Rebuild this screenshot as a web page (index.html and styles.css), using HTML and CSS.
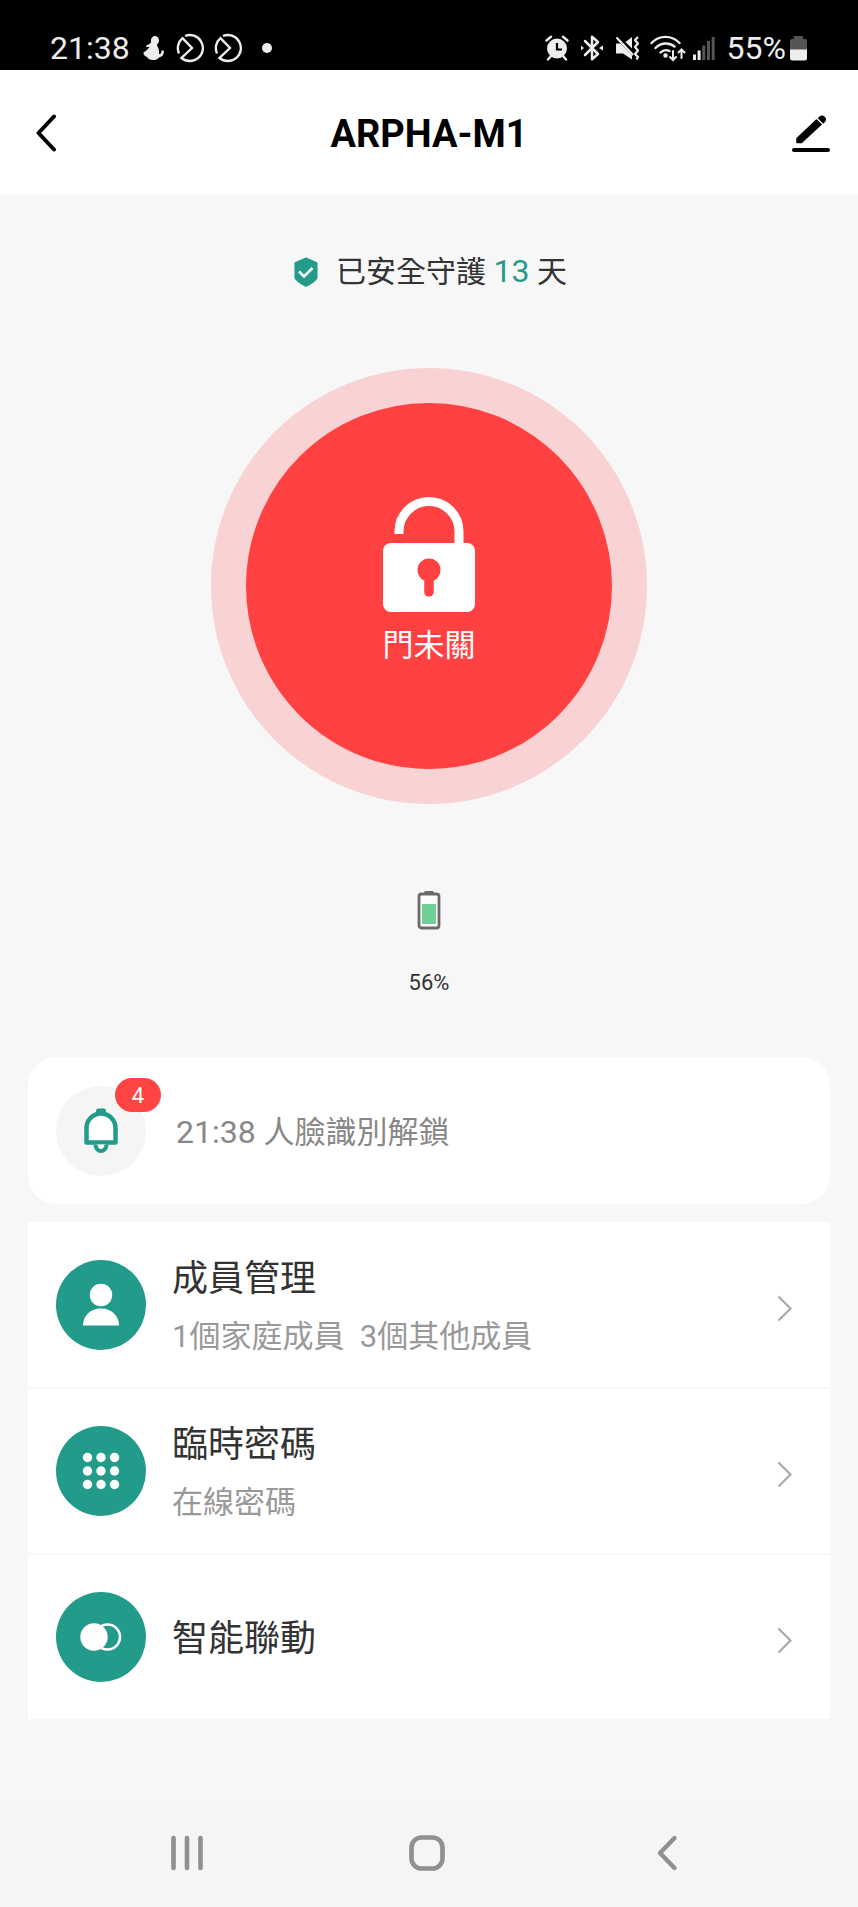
FILE: index.html
```html
<!DOCTYPE html>
<html lang="zh-Hant">
<head>
<meta charset="utf-8">
<meta name="viewport" content="width=device-width, initial-scale=1">
<title>ARPHA-M1</title>
<link rel="stylesheet" href="styles.css">
</head>
<body>
<div class="screen">
  <div class="statusbar">
    <div class="status-group">
      <span class="status-text">21:38</span>
      <svg class="status-person" width="22" height="26" viewBox="0 0 22 26" aria-hidden="true">
        <path d="M8 6a4 4.500 0 1 1 6.500 3c-.8 1-.8 1.500 0 2.500c1.500 2 1.800 4.500 1.500 7.500c1.800.3 2.500-1 2.500-3.500h2.300c.5 4.500-1.500 6.500-4.800 7c-1.500 2-3.500 2.500-6 2.500c-3 0-5-1-6-3C1.500 21 .3 19.500.5 17.500c2.500-1.500 4.500-3.500 6.500-6c-1 .8-2.500.8-4 0l.8-1.600c2 0 3.200-1.400 4.200-2.400z" fill="#ededed"/>
      </svg>
      <svg class="status-ring" width="30" height="30" viewBox="0 0 30 30" aria-hidden="true">
        <path d="M9 3A13 13 0 1 1 5.500 25L16 15L6.500 5.200A13 13 0 0 0 3 20.500" fill="none" stroke="#ededed" stroke-width="2.400"/>
      </svg>
      <svg class="status-ring" width="30" height="30" viewBox="0 0 30 30" aria-hidden="true">
        <path d="M9 3A13 13 0 1 1 5.500 25L16 15L6.500 5.200A13 13 0 0 0 3 20.500" fill="none" stroke="#ededed" stroke-width="2.400"/>
      </svg>
      <span class="status-dot"></span>
    </div>
    <div class="status-group">
      <svg class="status-alarm" width="24" height="26" viewBox="0 0 24 26" aria-hidden="true">
        <circle cx="12" cy="13.500" r="10" fill="#ededed"/>
        <path d="M1.500 5.500L6 1.800M22.500 5.500L18 1.800M6 21l-3 3.500M18 21l3 3.500" fill="none" stroke="#ededed" stroke-width="2.400" stroke-linecap="round"/>
        <path d="M12 8v6.500h5" fill="none" stroke="#000" stroke-width="2.200"/>
      </svg>
      <svg class="status-bt" width="22" height="26" viewBox="0 0 22 26" aria-hidden="true">
        <path d="M4 6l13 13l-6 5.200V1.800L17 7L4 20" fill="none" stroke="#ededed" stroke-width="2.500" stroke-linejoin="round" stroke-linecap="round"/>
        <path d="M0 10.500l3 2.500l-3 2.500zM22 10.500l-4 2.500l4 2.500z" fill="#ededed"/>
      </svg>
      <svg class="status-mute" width="26" height="26" viewBox="0 0 26 26" aria-hidden="true">
        <path d="M1 8.500h4.500l11.500 12v4L8 18.500H1zM10.500 7L17 2v11.500z" fill="#ededed"/>
        <path d="M1.500 2.500L18 20" stroke="#ededed" stroke-width="2.200"/>
        <path d="M23 2l-3 3l3 3.500l-3 3.500l3 3.500l-3 3.500l3 3l-1.500 2.500" fill="none" stroke="#ededed" stroke-width="2.200" stroke-linejoin="round"/>
      </svg>
      <svg class="status-wifi" width="36" height="28" viewBox="0 0 36 28" aria-hidden="true">
        <g fill="none" stroke="#ededed" stroke-width="2.400" stroke-linecap="round">
          <path d="M1.500 9a19 19 0 0 1 28 0M5.500 14a14 14 0 0 1 19-1.500M10.500 18.500a8 8 0 0 1 9-1.500"/>
          <path d="M23 17v8.500M20 23l3 3l3-3M31.500 24v-8.500M28.500 18.500l3-3l3 3" stroke-width="2"/>
        </g>
        <circle cx="15.500" cy="21.500" r="2.200" fill="#ededed"/>
      </svg>
      <svg class="status-signal" width="22" height="26" viewBox="0 0 22 26" aria-hidden="true">
        <path d="M0 19.500h3v5.500H0zM4.600 15.500h3V25h-3z" fill="#ededed"/>
        <path d="M9.300 10.500h3V25h-3zM14 6h3v19h-3zM18.700 2h3v23h-3z" fill="#555"/>
      </svg>
      <span class="status-text">55%</span>
      <svg class="status-battery" width="17" height="26" viewBox="0 0 17 26" aria-hidden="true">
        <path d="M4 1h9v3h2a2 2 0 0 1 2 2v9H0V6a2 2 0 0 1 2-2h2z" fill="#555"/>
        <path d="M0 14.500h17V23a2.500 2.500 0 0 1-2.500 2.500h-12A2.500 2.500 0 0 1 0 23z" fill="#ededed"/>
      </svg>
    </div>
  </div>

  <header class="header">
    <button class="icon-button" aria-label="返回">
      <svg width="20" height="38" viewBox="0 0 20 38" aria-hidden="true"><path d="M18 2.500L2.500 19L18 35.500" fill="none" stroke="#000" stroke-width="4" stroke-linecap="round" stroke-linejoin="round"/></svg>
    </button>
    <h1 class="title">ARPHA-M1</h1>
    <button class="icon-button icon-button-end" aria-label="編輯">
      <svg width="38" height="38" viewBox="0 0 38 38" aria-hidden="true">
        <path d="M2 36h34" stroke="#000" stroke-width="4" stroke-linecap="round"/>
        <path d="M5 24.500L24.500 6l4.500 4.500L9.500 28.500H5z" fill="#000" stroke="#000" stroke-width="1.500" stroke-linejoin="round"/>
        <path d="M25.700 4.300l1.500-1.500a3.800 3.800 0 0 1 5.600 5.400l-1.600 1.600z" fill="#000"/>
      </svg>
    </button>
  </header>

  <main class="content">
    <p class="guard">
      <svg width="24" height="30" viewBox="0 0 24 30" aria-hidden="true">
        <path d="M12 1.200L22.800 6v14.500c0 2-6.500 7-10.800 8.500C7.700 27.500 1.200 22.500 1.200 20.500V6z" fill="#239b8b" stroke="#239b8b" stroke-width="1.500" stroke-linejoin="round"/>
        <path d="M5 14.500l5 5l8.500-8.500" fill="none" stroke="#fff" stroke-width="2.500"/>
      </svg>
      <span>已安全守護 <strong class="guard-days">13</strong> 天</span>
    </p>

    <button class="lock">
      <svg width="92" height="116" viewBox="0 0 92 116" aria-hidden="true">
        <path d="M16 38v-2.500a30 30 0 0 1 60 0V50" fill="none" stroke="#fff" stroke-width="9"/>
        <rect y="47" width="92" height="69" rx="8" fill="#fff"/>
        <circle cx="46" cy="74" r="11.500" fill="#ff4141"/>
        <path d="M46 76v20" stroke="#ff4141" stroke-width="9.500" stroke-linecap="round"/>
      </svg>
      <span>門未關</span>
    </button>

    <div class="battery">
      <svg width="24" height="40" viewBox="0 0 24 40" aria-hidden="true">
        <rect x="2" y="4" width="20" height="34" rx="2.500" fill="#fbfbfb" stroke="#6e6a6a" stroke-width="2.800"/>
        <path d="M8 1.500h8l1 2.500H7z" fill="#6e6a6a" stroke="#6e6a6a" stroke-linejoin="round"/>
        <path d="M5 14h14v20H5z" fill="#6fcf97"/>
      </svg>
      <span>56%</span>
    </div>

    <a class="notice" href="#">
      <span class="bubble bubble-light">
        <svg width="36" height="46" viewBox="0 0 36 46" aria-hidden="true">
          <path d="M3.500 34.500V20a14.500 14.500 0 0 1 29 0v14.500z" fill="#fff" stroke="#239b8b" stroke-width="4.500" stroke-linejoin="round"/>
          <path d="M15.500 3h5" stroke="#239b8b" stroke-width="5" stroke-linecap="round"/>
          <path d="M12.500 36.500a5.500 6.500 0 0 0 11 0" fill="#fff" stroke="#239b8b" stroke-width="4"/>
        </svg>
        <span class="badge">4</span>
      </span>
      <span class="notice-text"><time class="notice-time">21:38</time> 人臉識別解鎖</span>
    </a>

    <nav class="menu">
      <a class="row" href="#">
        <span class="bubble">
          <svg width="38" height="46" viewBox="0 0 38 46" aria-hidden="true"><circle cx="19" cy="13" r="11.200" fill="#fff"/><path d="M1 43.500c0-9 6.500-17 18-17s18 8 18 17z" fill="#fff"/></svg>
        </span>
        <span class="row-body">
          <span class="row-title">成員管理</span>
          <span class="row-note">1個家庭成員&nbsp; 3個其他成員</span>
        </span>
        <svg class="chevron" width="15" height="34" viewBox="0 0 15 34" aria-hidden="true"><path d="M1.500 8.500L13.500 20.500L1.500 32.500" fill="none" stroke="#aaa" stroke-width="2.200"/></svg>
      </a>
      <a class="row" href="#">
        <span class="bubble">
          <svg width="38" height="38" viewBox="0 0 38 38" fill="#fff" aria-hidden="true">
            <circle cx="5.500" cy="5.500" r="4.700"/><circle cx="19" cy="5.500" r="4.700"/><circle cx="32.500" cy="5.500" r="4.700"/>
            <circle cx="5.500" cy="19" r="4.700"/><circle cx="19" cy="19" r="4.700"/><circle cx="32.500" cy="19" r="4.700"/>
            <circle cx="5.500" cy="32.500" r="4.700"/><circle cx="19" cy="32.500" r="4.700"/><circle cx="32.500" cy="32.500" r="4.700"/>
          </svg>
        </span>
        <span class="row-body">
          <span class="row-title">臨時密碼</span>
          <span class="row-note">在線密碼</span>
        </span>
        <svg class="chevron" width="15" height="34" viewBox="0 0 15 34" aria-hidden="true"><path d="M1.500 8.500L13.500 20.500L1.500 32.500" fill="none" stroke="#aaa" stroke-width="2.200"/></svg>
      </a>
      <a class="row" href="#">
        <span class="bubble">
          <svg width="42" height="28" viewBox="0 0 42 28" aria-hidden="true"><circle cx="14" cy="14" r="13.700" fill="#fff"/><circle cx="27.500" cy="14" r="12.500" fill="none" stroke="#fff" stroke-width="2.600"/></svg>
        </span>
        <span class="row-body">
          <span class="row-title">智能聯動</span>
        </span>
        <svg class="chevron" width="15" height="34" viewBox="0 0 15 34" aria-hidden="true"><path d="M1.500 8.500L13.500 20.500L1.500 32.500" fill="none" stroke="#aaa" stroke-width="2.200"/></svg>
      </a>
    </nav>
  </main>

  <div class="navbar">
    <button class="nav-button" aria-label="最近使用">
      <svg width="34" height="38" viewBox="0 0 34 38" aria-hidden="true"><path d="M3.500 4v30M17 4v30M30.500 4v30" stroke="#909090" stroke-width="4.600" stroke-linecap="round"/></svg>
    </button>
    <button class="nav-button" aria-label="主畫面">
      <svg width="38" height="38" viewBox="0 0 38 38" aria-hidden="true"><rect x="3.500" y="3.500" width="31" height="31" rx="10" fill="none" stroke="#909090" stroke-width="4.600"/></svg>
    </button>
    <button class="nav-button" aria-label="返回">
      <svg width="22" height="38" viewBox="0 0 22 38" aria-hidden="true"><path d="M18.500 4L4 19L18.500 34" fill="none" stroke="#909090" stroke-width="4.400" stroke-linecap="round" stroke-linejoin="round"/></svg>
    </button>
  </div>
</div>
</body>
</html>
```
FILE: styles.css
```css
* {
  box-sizing: border-box;
}

body {
  margin: 0;
  background: #f7f7f7;
  color: #333;
  font-family: Roboto, "Noto Sans CJK TC", sans-serif;
  font-weight: 400;
}

button {
  padding: 0;
  border: 0;
  background: none;
  color: inherit;
  font: inherit;
  cursor: pointer;
}

a {
  color: inherit;
  text-decoration: none;
}

svg {
  display: block;
  flex: none;
}

.screen {
  display: flex;
  flex-direction: column;
  min-height: 100vh;
}

.statusbar {
  display: flex;
  justify-content: space-between;
  align-items: center;
  height: 70px;
  padding: 26px 51px 0 50px;
  background: #000;
  color: #ededed;
}

.status-group {
  display: flex;
  align-items: center;
}

.status-text {
  font-size: 32px;
  line-height: 40px;
}

.status-person {
  margin-left: 13px;
}

.status-ring {
  margin-left: 11px;
}

.status-ring + .status-ring {
  margin-left: 8px;
}

.status-dot {
  width: 10px;
  height: 10px;
  margin-left: 18px;
  border-radius: 50%;
  background: #ededed;
}

.status-bt,
.status-mute {
  margin-left: 12px;
}

.status-wifi {
  margin-left: 9px;
}

.status-signal {
  margin: 0 12px 0 7px;
}

.status-battery {
  margin-left: 4px;
}

.header {
  display: grid;
  grid-template-columns: 1fr auto 1fr;
  align-items: center;
  height: 125px;
  padding: 0 28px 0 28px;
  background: #fff;
}

.icon-button {
  justify-self: start;
  padding-left: 8px;
}

.icon-button-end {
  justify-self: end;
  padding-left: 0;
}

.title {
  margin: 0;
  padding-top: 3px;
  color: #000;
  font-size: 38px;
  font-weight: 700;
  line-height: 48px;
}

.content {
  display: flex;
  flex: 1;
  flex-direction: column;
  align-items: center;
  padding: 56px 28px 80px;
}

.guard {
  display: flex;
  align-items: center;
  gap: 18px;
  margin: 0 0 76px;
  padding-left: 3px;
  font-size: 30px;
  line-height: 40px;
}

.guard-days {
  color: #239b8b;
  font-size: 32px;
  font-weight: 400;
}

.lock {
  display: flex;
  flex-direction: column;
  align-items: center;
  gap: 14px;
  width: 436px;
  height: 436px;
  padding-top: 93px;
  border: 35px solid #f9d3d4;
  border-radius: 50%;
  background: #ff4141;
  color: #fff;
  font-size: 31px;
  line-height: 40px;
}

.battery {
  display: flex;
  flex-direction: column;
  align-items: center;
  gap: 38px;
  margin: 86px 0 59px;
  font-size: 22px;
  line-height: 30px;
}

.notice {
  display: flex;
  align-items: center;
  align-self: stretch;
  gap: 30px;
  min-height: 147px;
  margin-bottom: 18px;
  padding: 0 28px;
  border-radius: 28px;
  background: #fff;
  color: #888;
}

.notice-text {
  padding-top: 4px;
  font-size: 31px;
  line-height: 40px;
}

.notice-time {
  font-size: 32px;
}

.bubble {
  position: relative;
  display: flex;
  flex: none;
  align-items: center;
  justify-content: center;
  width: 90px;
  height: 90px;
  border-radius: 50%;
  background: #239b8b;
}

.bubble-light {
  background: #f5f5f5;
}

.badge {
  position: absolute;
  top: -8px;
  right: -15px;
  width: 46px;
  padding-top: 2px;
  border-radius: 17px;
  background: #ff4444;
  color: #fff;
  font-size: 22px;
  line-height: 32px;
  text-align: center;
}

.menu {
  align-self: stretch;
  background: #fff;
}

.row {
  display: flex;
  align-items: center;
  gap: 26px;
  min-height: 165px;
  padding: 0 38px 0 28px;
}

.row + .row {
  border-top: 2px solid #f7f7f7;
  min-height: 166px;
}

.row-body {
  display: flex;
  flex: 1;
  flex-direction: column;
  gap: 12px;
  padding-top: 4px;
}

.row-title {
  font-size: 36px;
  line-height: 48px;
}

.row-note {
  color: #999;
  font-size: 31px;
  line-height: 44px;
}

.navbar {
  display: grid;
  grid-template-columns: repeat(3, 1fr);
  height: 107px;
  padding: 0 71px 2px 67px;
  background: #f5f5f5;
}

.nav-button {
  display: flex;
  align-items: center;
  justify-content: center;
}
```
